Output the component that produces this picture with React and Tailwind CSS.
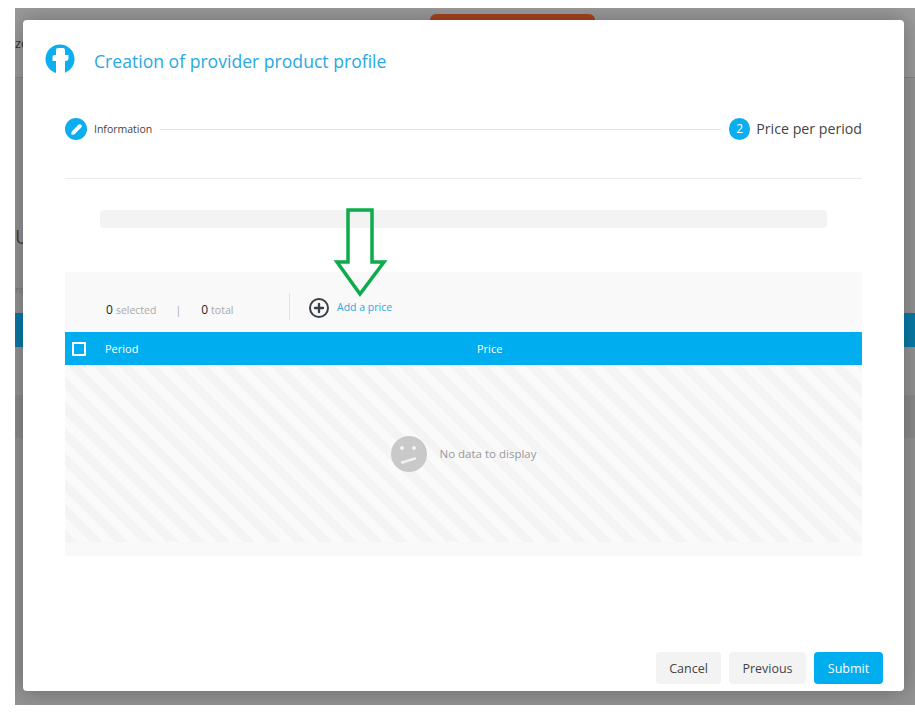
import React from 'react';
import { Plus, Pencil } from 'lucide-react';

const font = { fontFamily: '"Open Sans", sans-serif' };

const BackgroundPage = () => (
  <div className="flex flex-col h-full bg-[#939393]">
    <div className="relative flex h-[70px] shrink-0 items-start border-b border-[#878787] bg-[#9b9b9b] pt-[6px]">
      <span className="absolute left-0 top-[27px] text-[13px] leading-4 text-[#333]">ze</span>
      <div className="ml-[415px] h-[20px] w-[165px] rounded-t-md bg-[#a8431f]" />
    </div>
    <div className="mt-[147px] text-[20px] leading-6 text-[#444]">U</div>
    <div className="mt-[35px] text-[9px] leading-3 text-[#777]">nt</div>
    <div className="mt-[17px] h-[34px] shrink-0 bg-[#0a7aa6]" />
    <div className="mt-[48px] h-[43px] shrink-0 bg-[#8b8b8b]" />
  </div>
);

const Logo = () => (
  <svg width="30" height="30" viewBox="0 0 30 30" className="shrink-0">
    <circle cx="15" cy="15" r="14.5" fill="#0caeef" />
    <path d="M11 30V17H7.500V13q0-2 2-2H11V6q0-2 2-2h5q2 0 2 2v5h3.500v3q0 3-3 3H20v13z" fill="#fff" />
  </svg>
);

const Smiley = () => (
  <svg width="36" height="36" viewBox="0 0 36 36">
    <circle cx="18" cy="18" r="18" fill="#c9c9c9" />
    <circle cx="11" cy="12" r="2" fill="#f1f1f1" />
    <circle cx="23" cy="12" r="2" fill="#f1f1f1" />
    <path d="M11 26.5l13-4" stroke="#f1f1f1" strokeWidth="2.4" strokeLinecap="round" />
  </svg>
);

const Arrow = () => (
  <svg width="56" height="92" viewBox="0 0 56 92" className="absolute left-[310px] top-[187px]">
    <path d="M15 3h24v52h12L27 87 4 55h11z" fill="none" stroke="#0dab4c" strokeWidth="3.5" />
  </svg>
);

const App = () => (
  <div className="h-[712px] w-[915px] overflow-hidden bg-white pl-[15px] pt-[8px] text-[#444]" style={font}>
    <div className="relative h-[697px] w-[900px] overflow-hidden">
      <BackgroundPage />

      <div className="absolute left-[8px] top-[12px] flex h-[671px] w-[881px] flex-col rounded bg-white shadow-[0_0_22px_rgba(0,0,0,0.3)]">
        <div className="flex items-center gap-[19px] pl-[22px] pt-[24px]">
          <Logo />
          <h1 className="pt-[4px] text-[17.6px] leading-[26px] text-[#2aa8e0]">Creation of provider product profile</h1>
        </div>

        <div className="mt-[44px] flex items-center px-[42px]">
          <div className="flex h-[22px] w-[22px] items-center justify-center rounded-full bg-[#0caeef]">
            <Pencil size={11} strokeWidth={3} fill="#fff" className="text-white" />
          </div>
          <span className="ml-[7px] pt-[2px] text-[10.5px] text-[#444]">Information</span>
          <div className="mx-[8px] h-px flex-1 bg-[#e3e3e3]" />
          <div className="flex h-[22px] w-[21px] items-center justify-center rounded-full bg-[#0caeef] text-[12px] text-white">2</div>
          <span className="ml-[6px] -mt-[1px] text-[14.2px] text-[#444]">Price per period</span>
        </div>

        <div className="mx-[42px] mt-[38px] h-px bg-[#ececec]" />

        <div className="mx-[77px] mt-[31px] h-[18px] rounded bg-[#f3f3f3]" />

        <div className="mx-[42px] mt-[44px] flex flex-col">
          <div className="flex h-[60px] items-end bg-[#f9f9f9] pb-[12px] pl-[41px]">
            <div className="flex w-[183px] items-baseline pb-[1px]">
              <span className="text-[12px] text-[#222]">0</span>
              <span className="ml-[3px] text-[10.5px] text-[#aaa]">selected</span>
              <span className="ml-[19px] text-[10.5px] text-[#aaa]">|</span>
              <span className="ml-[20px] text-[12px] text-[#222]">0</span>
              <span className="ml-[3px] text-[10.5px] text-[#aaa]">total</span>
            </div>
            <div className="h-[27px] w-px bg-[#e2e2e2]" />
            <div className="ml-[19px] flex h-[27px] items-center gap-[8px] pt-[2px]">
              <div className="flex h-[20px] w-[20px] items-center justify-center rounded-full border-[2.5px] border-[#3a3f4a]">
                <Plus size={14} strokeWidth={4} className="text-[#3a3f4a]" />
              </div>
              <span className="-mt-[0px] text-[10.5px] text-[#2aa8e0]">Add a price</span>
            </div>
          </div>

          <div className="flex h-[33px] items-center bg-[#00adef] pt-[1px] text-[11px] text-white">
            <div className="ml-[7px] h-[14px] w-[14px] rounded-[1px] border-2 border-white" />
            <span className="ml-[19px] w-[372px]">Period</span>
            <span>Price</span>
          </div>

          <div className="flex h-[177px] items-center justify-center gap-[13px] bg-[repeating-linear-gradient(45deg,#f4f4f4,#f4f4f4_9px,#fafafa_9px,#fafafa_18px)] pt-[1px]">
            <Smiley />
            <span className="text-[11.5px] text-[#999]">No data to display</span>
          </div>
          <div className="h-[14px] bg-[#f9f9f9]" />
        </div>

        <div className="mt-auto flex justify-end gap-[8px] pb-[7px] pr-[21px] text-[12.5px]">
          <button className="h-[32px] w-[65px] rounded bg-[#f3f3f3] pt-[2px] text-[#444]">Cancel</button>
          <button className="h-[32px] w-[77px] rounded bg-[#f3f3f3] pt-[2px] text-[#444]">Previous</button>
          <button className="h-[32px] w-[69px] rounded bg-[#00adef] pt-[2px] text-white">Submit</button>
        </div>

        <Arrow />
      </div>
    </div>
  </div>
);

export default App;
